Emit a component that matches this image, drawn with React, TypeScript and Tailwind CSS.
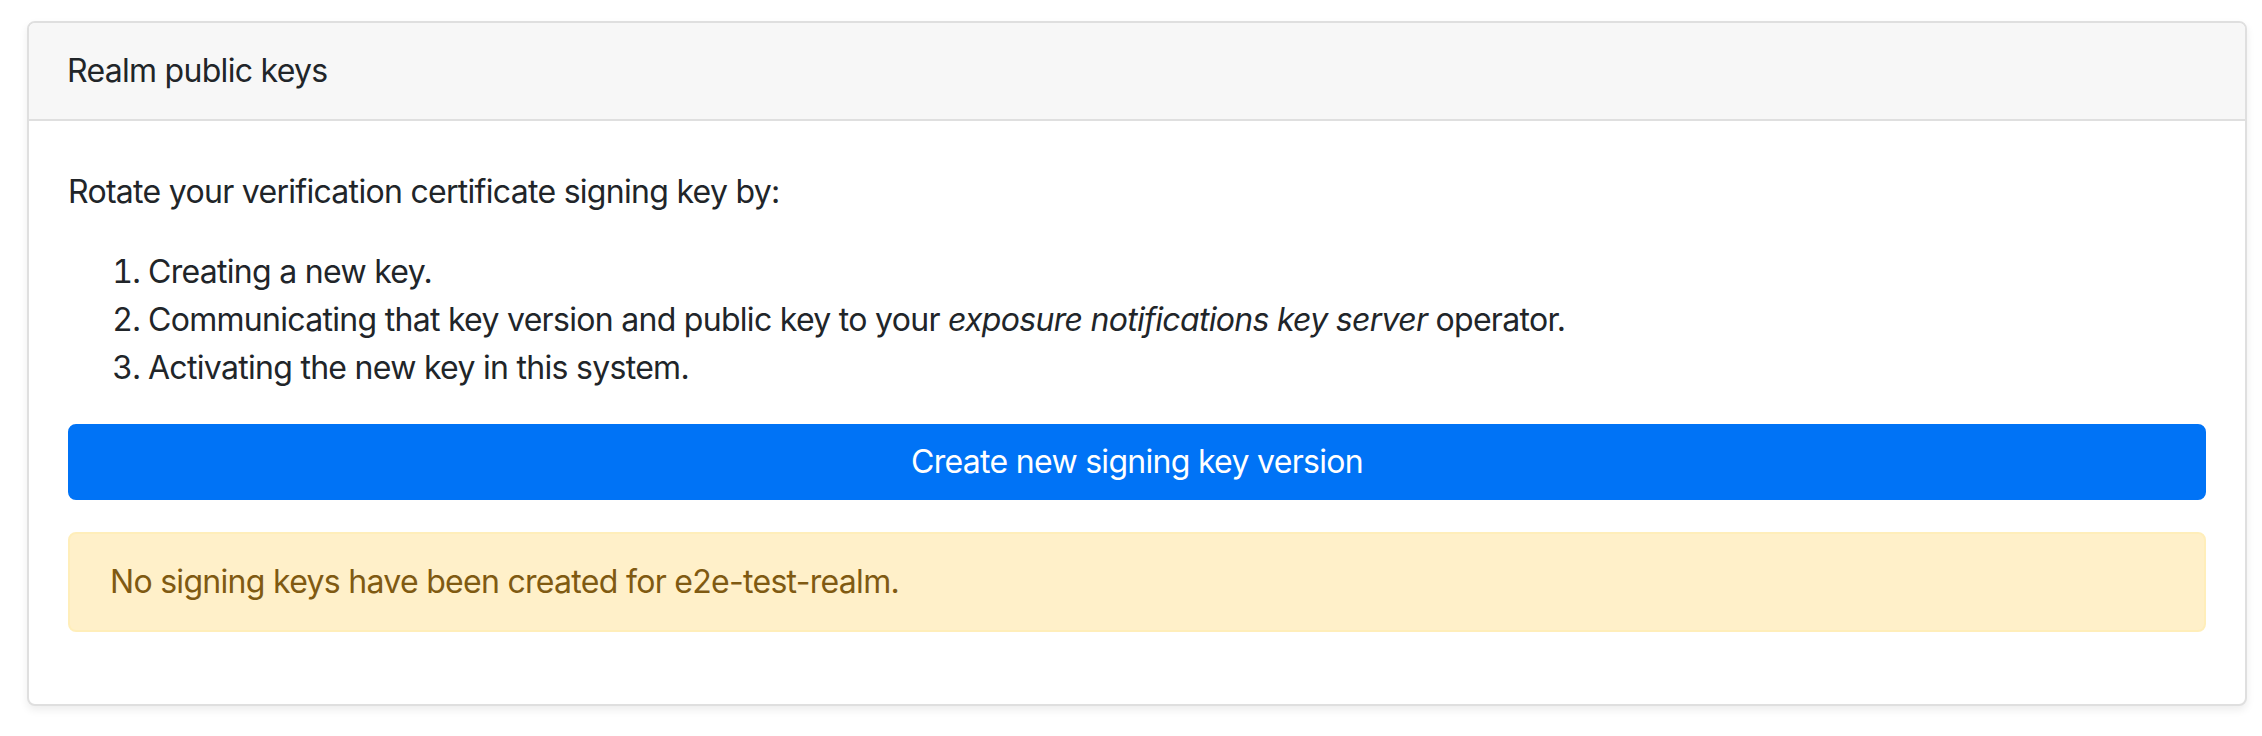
import React from "react";

const steps: React.ReactNode[] = [
  "Creating a new key.",
  <>
    Communicating that key version and public key to your{" "}
    <em>exposure notifications key server</em> operator.
  </>,
  "Activating the new key in this system.",
];

export default function App() {
  return (
    <div className="min-h-[736px] bg-white pt-[21px] pl-[27px] pr-[15px] font-['Inter','Liberation_Sans',sans-serif] text-[32px] leading-[48px] tracking-[-0.022em] text-[#212529]">
      <div className="rounded-[8px] border-2 border-[#dfdfdf] bg-white shadow-[0_4px_8px_rgba(0,0,0,0.075)]">
        {/* Card header */}
        <div className="rounded-t-[6px] border-b-2 border-[#dfdfdf] bg-[#f7f7f7] px-[38px] py-[24px]">
          Realm public keys
        </div>

        {/* Card body */}
        <div className="px-[39px] pt-[47px] pb-[40px]">
          <p className="mb-[32px]">Rotate your verification certificate signing key by:</p>

          <ol className="mb-[32px] list-decimal pl-[80px]">
            {steps.map((step, i) => (
              <li key={i}>{step}</li>
            ))}
          </ol>

          <button
            type="button"
            className="block w-full rounded-[8px] border-2 border-[#0073f6] bg-[#0073f6] px-[24px] py-[12px] text-center text-white"
          >
            Create new signing key version
          </button>

          <div className="mt-[32px] mb-[32px] rounded-[8px] border-2 border-[#ffeeba] bg-[#fff0c9] px-[40px] py-[24px] text-[#7f5a12]">
            No signing keys have been created for e2e-test-realm.
          </div>
        </div>
      </div>
    </div>
  );
}
